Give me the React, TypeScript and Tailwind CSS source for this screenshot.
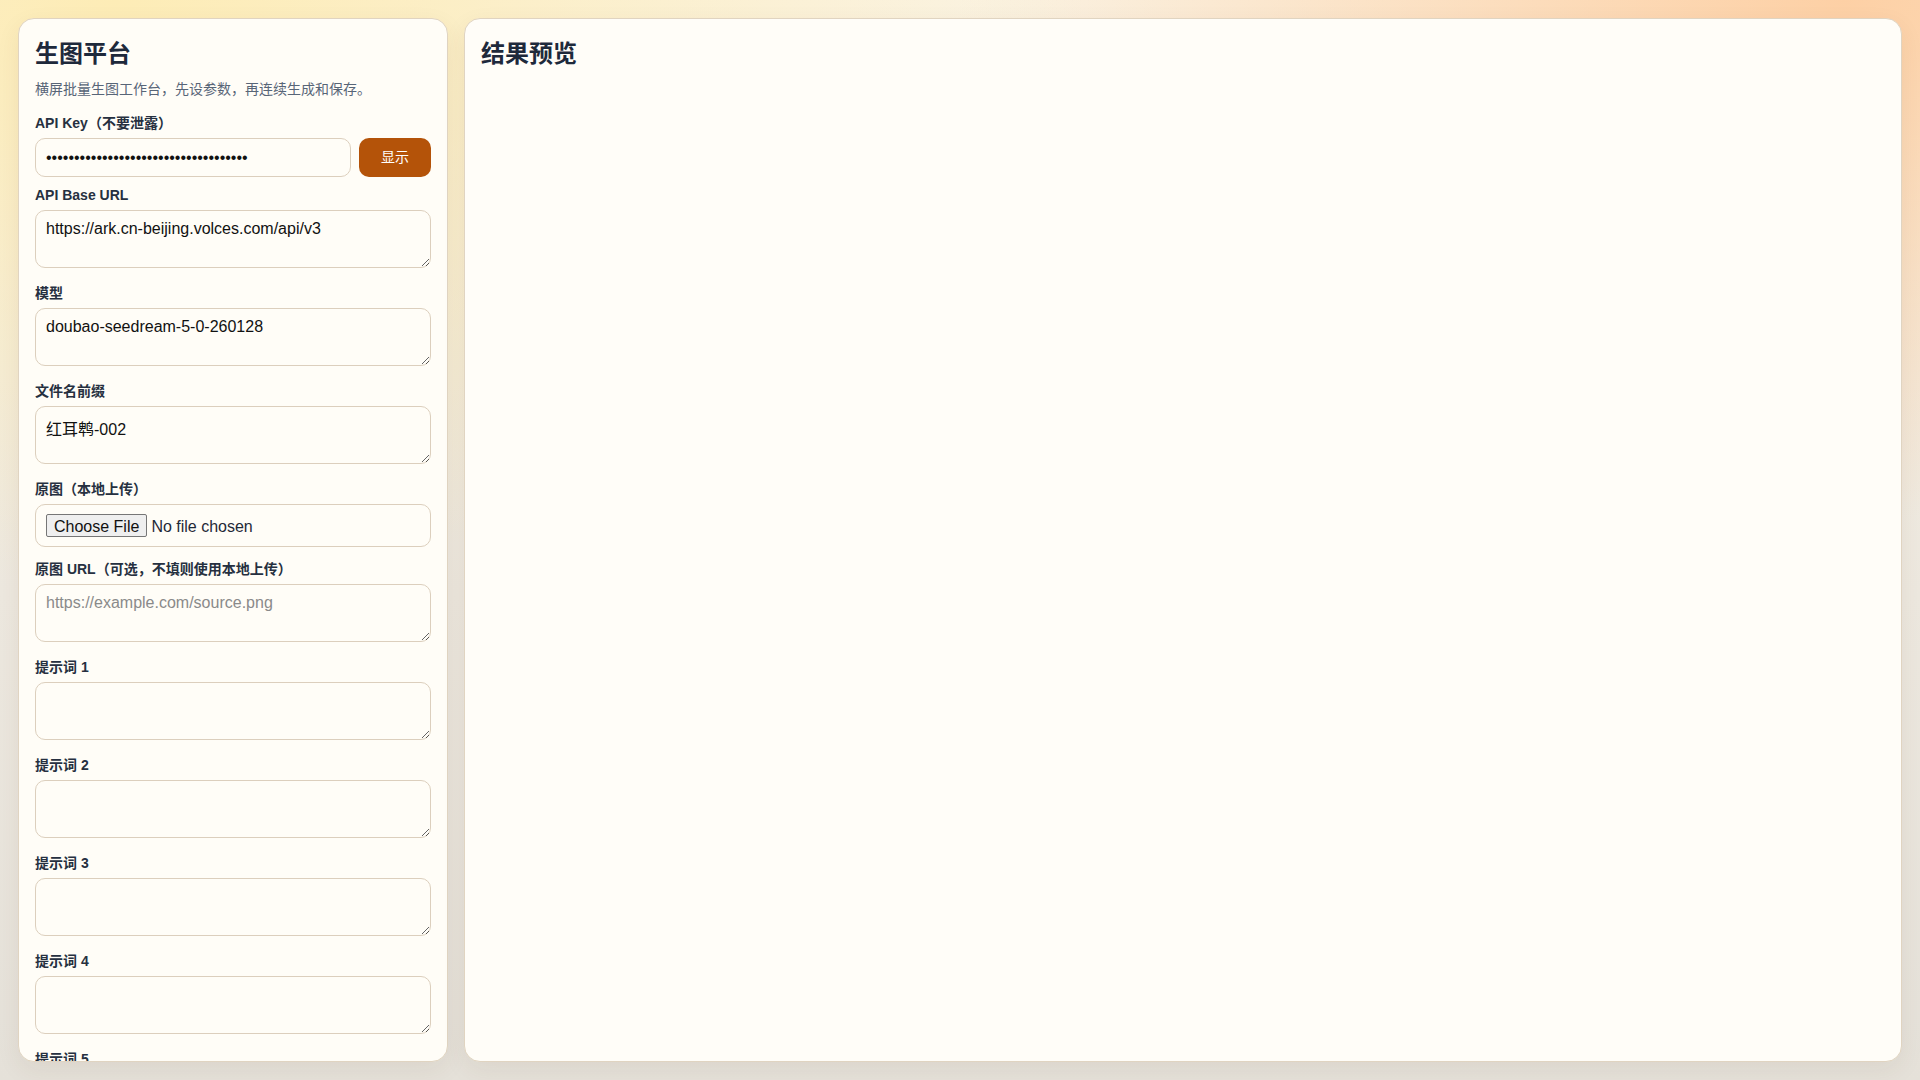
const fieldLabel = "block text-[14px] leading-[17px] font-bold text-[#263040] mb-[6px]"
const areaClass =
    "block w-full h-[58px] rounded-[10px] border border-[#dccfbd] bg-[#fffdf7] px-[10px] py-[9px] text-[16px] leading-[normal] text-[#111111] placeholder:text-[#8a8a8a] outline-none"

type Field = { label: string; value?: string; placeholder?: string; mt: string }

const topFields: Field[] = [
    { label: "API Base URL", value: "https://ark.cn-beijing.volces.com/api/v3", mt: "mt-[10px]" },
    { label: "模型", value: "doubao-seedream-5-0-260128", mt: "mt-[17px]" },
    { label: "文件名前缀", value: "红耳鹎-002", mt: "mt-[17px]" },
]

const prompts = ["提示词 1", "提示词 2", "提示词 3", "提示词 4", "提示词 5", "提示词 6"]

function TextField({ label, value, placeholder, mt }: Field) {
    return (
        <div className={mt}>
            <label className={fieldLabel}>{label}</label>
            <textarea className={areaClass} defaultValue={value} placeholder={placeholder} rows={2} />
        </div>
    )
}

export default function App() {
    return (
        <div className="h-screen w-full overflow-hidden p-[18px] grid grid-cols-[430px_1fr] gap-4 font-['Liberation_Sans','Noto_Sans_CJK_SC',sans-serif] bg-[radial-gradient(ellipse_at_6%_0%,#fdecb6_0%,transparent_38%),radial-gradient(ellipse_at_96%_0%,#fdd0a5_0%,transparent_34%),linear-gradient(180deg,#faf3e4_0%,#ede8df_55%,#e5e1d9_100%)]">
            {/* Left: settings */}
            <aside className="h-full overflow-hidden rounded-2xl border border-[#e0d4c1] bg-[#fffdf7] px-4 pt-4 shadow-[0_8px_24px_rgba(80,60,30,0.07)]">
                <h1 className="mt-[3px] text-[24px] leading-[31px] font-bold text-[#1e293b]">生图平台</h1>
                <p className="mt-[10px] text-[14px] leading-[20px] text-[#586577]">
                    横屏批量生图工作台，先设参数，再连续生成和保存。
                </p>

                <div className="mt-[16px]">
                    <label className={fieldLabel}>API Key（不要泄露）</label>
                    <div className="flex gap-2 h-[39px]">
                        <input
                            type="password"
                            defaultValue="sk-7f3a9c21b8e64d05a1f2c3d4e5f607189"
                            className="flex-1 min-w-0 h-full rounded-[10px] border border-[#dccfbd] bg-[#fffdf7] px-[10px] text-[16px] text-[#111111] outline-none"
                        />
                        <button className="w-[72px] h-full rounded-[10px] bg-[#b45309] text-[14px] text-white">显示</button>
                    </div>
                </div>

                {topFields.map((f) => (
                    <TextField key={f.label} {...f} />
                ))}

                <div className="mt-[17px]">
                    <label className={fieldLabel}>原图（本地上传）</label>
                    <input
                        type="file"
                        className="block w-full h-[43px] rounded-[10px] border border-[#dccfbd] bg-[#fffdf7] px-[10px] py-[9px] text-[16px] leading-[23px] text-[#1f2937] file:h-[23px] file:mr-[4px] file:px-[7px] file:rounded-[2px] file:border file:border-[#767676] file:bg-[#efefef] file:text-[#111111]"
                    />
                </div>

                <TextField label="原图 URL（可选，不填则使用本地上传）" placeholder="https://example.com/source.png" mt="mt-[14px]" />

                {prompts.map((p) => (
                    <TextField key={p} label={p} mt="mt-[17px]" />
                ))}
            </aside>

            {/* Right: preview */}
            <main className="h-full overflow-hidden rounded-2xl border border-[#e0d4c1] bg-[#fffdf8] px-4 pt-4 shadow-[0_8px_24px_rgba(80,60,30,0.07)]">
                <h2 className="mt-[3px] text-[24px] leading-[31px] font-bold text-[#1e293b]">结果预览</h2>
            </main>
        </div>
    )
}
